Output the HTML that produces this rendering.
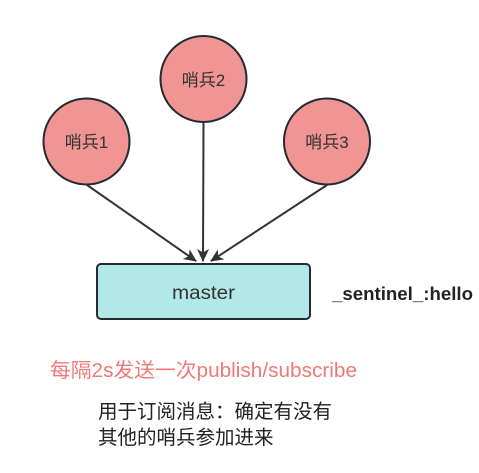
<!DOCTYPE html>
<html><head><meta charset="utf-8"><style>
html,body{margin:0;padding:0;background:#fff;width:479px;height:473px;overflow:hidden}
svg{display:block}
text{font-family:"Liberation Sans","Noto Sans CJK SC",sans-serif}
</style></head><body>
<svg width="479" height="473" viewBox="0 0 479 473" xmlns="http://www.w3.org/2000/svg">
<defs><marker id="a" markerWidth="14" markerHeight="14" refX="12" refY="6" orient="auto" markerUnits="userSpaceOnUse"><path d="M0,0 L13,6 L0,12 L3.5,6 Z" fill="#333"/></marker></defs>
<g stroke="#333" stroke-width="2" fill="none">
<line x1="87" y1="185" x2="196" y2="261" marker-end="url(#a)"/>
<line x1="203.5" y1="123" x2="203" y2="261" marker-end="url(#a)"/>
<line x1="327" y1="185" x2="211" y2="261" marker-end="url(#a)"/>
</g>
<g fill="#f09494" stroke="#242a30" stroke-width="2">
<circle cx="86.5" cy="141.5" r="43"/>
<circle cx="203.5" cy="79" r="43"/>
<circle cx="327" cy="141.5" r="43"/>
</g>
<rect x="97" y="264" width="213" height="55" rx="4" fill="#b3e8e8" stroke="#242a30" stroke-width="2"/>
<g font-size="17" fill="#333" text-anchor="middle">
<text x="86.5" y="148">哨兵1</text>
<text x="203.5" y="86">哨兵2</text>
<text x="327" y="148">哨兵3</text>
<text x="203.5" y="299" font-size="19" textLength="63" lengthAdjust="spacingAndGlyphs">master</text>
</g>
<text x="332" y="300" font-size="18" font-weight="bold" fill="#222" textLength="141" lengthAdjust="spacingAndGlyphs">_sentinel_:hello</text>
<text x="50" y="377" font-size="20" fill="#f07878" textLength="307" lengthAdjust="spacingAndGlyphs">每隔2s发送一次publish/subscribe</text>
<text x="98" y="418" font-size="19.5" fill="#222">用于订阅消息：确定有没有</text>
<text x="98" y="444" font-size="19.5" fill="#222">其他的哨兵参加进来</text>
</svg>
</body></html>
